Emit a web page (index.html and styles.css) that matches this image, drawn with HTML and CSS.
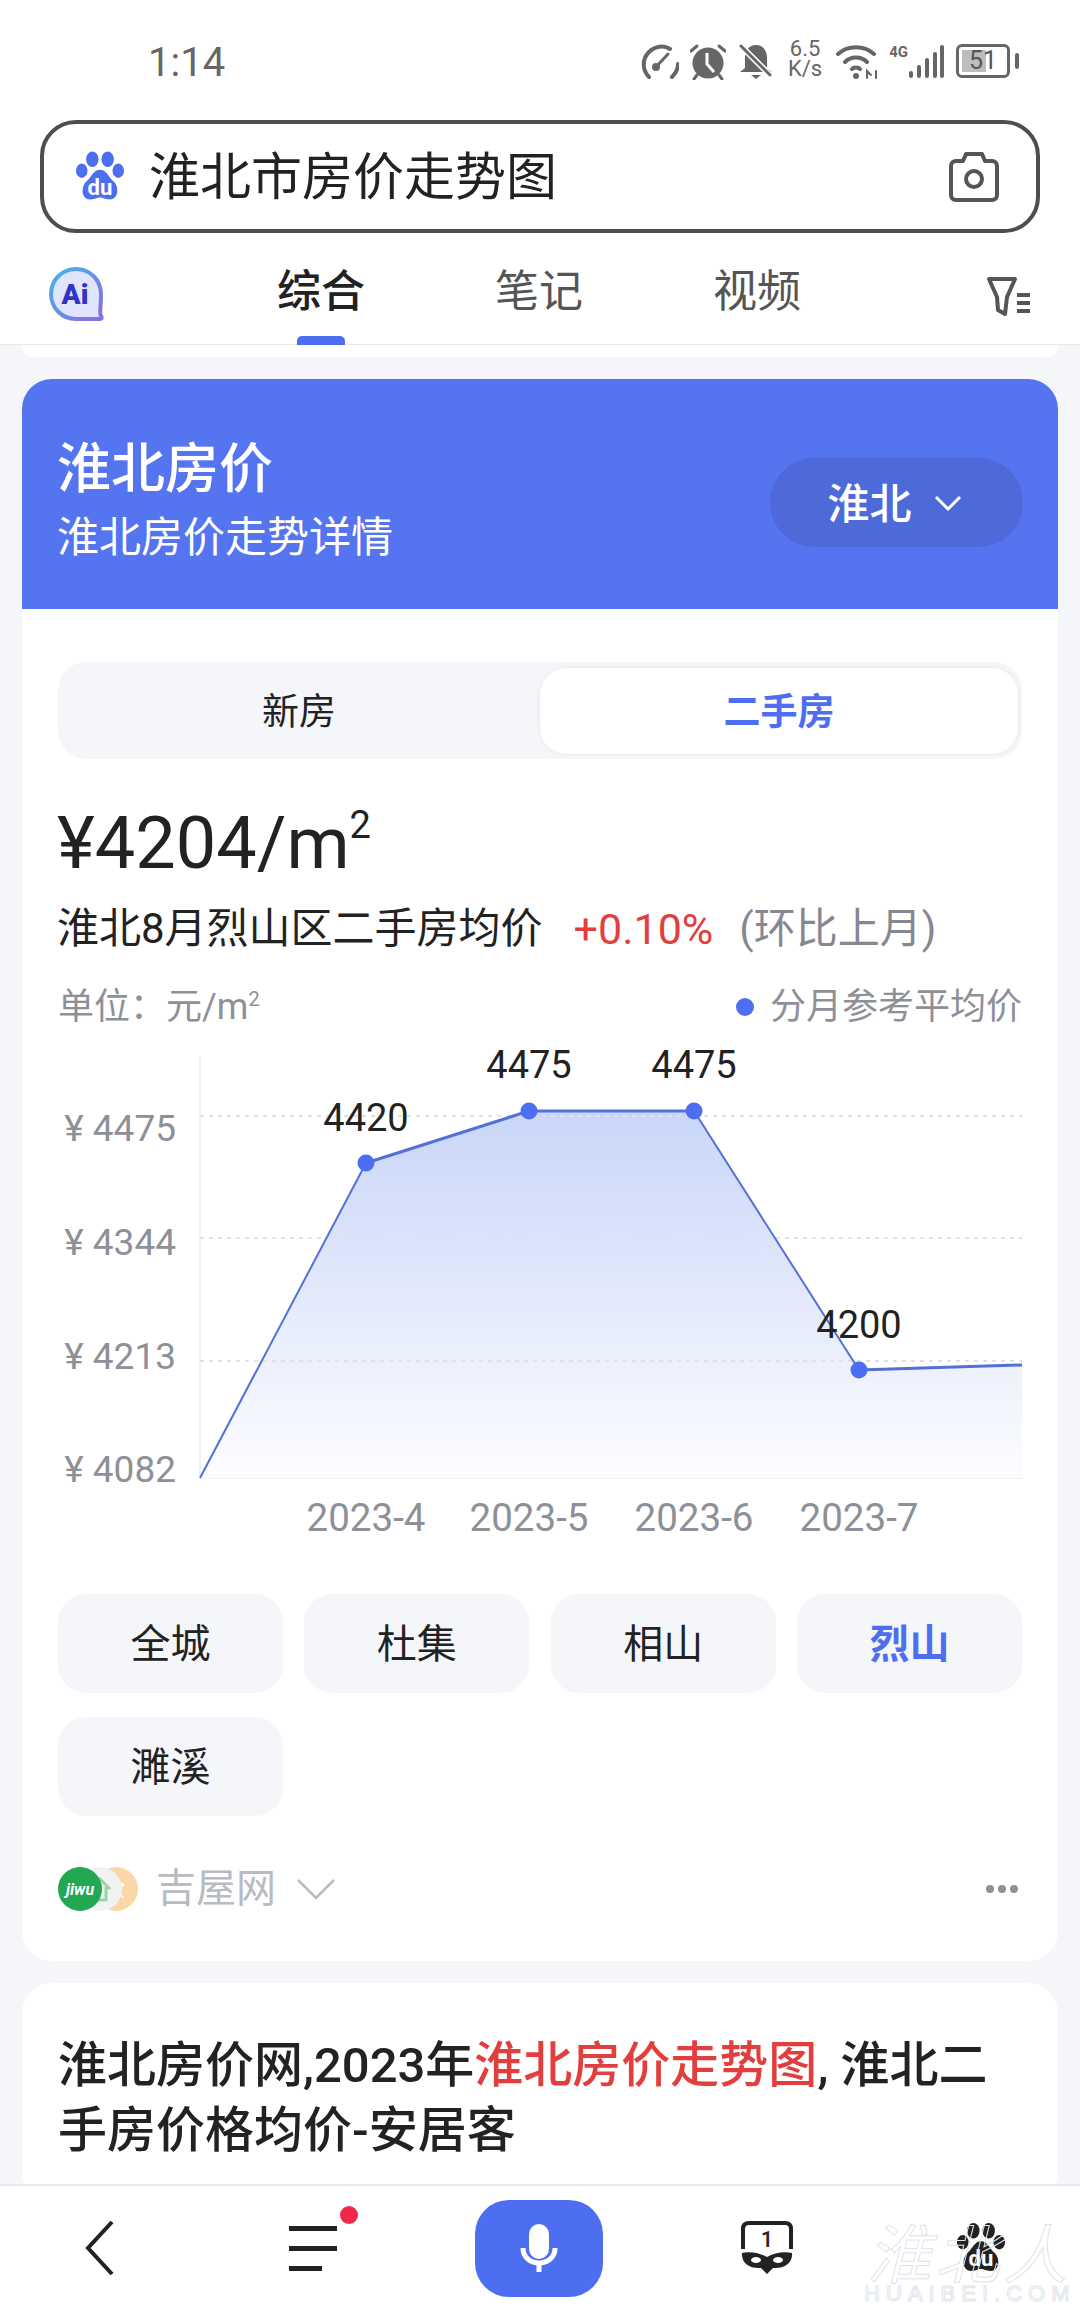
FILE: index.html
```html
<!DOCTYPE html>
<html lang="zh-CN">
<head>
    <meta charset="UTF-8">
    <meta name="viewport" content="width=device-width, initial-scale=1.0">
    <title>淮北市房价走势图</title>
    <link rel="stylesheet" href="styles.css">
</head>
<body>
<div class="page">
    <!-- status bar -->
    <div class="status-bar">
        <span class="time">1:14</span>
        <div class="status-icons">
            <svg class="ic-speed" width="38" height="36" viewBox="0 0 38 36" fill="none" stroke="#666" stroke-width="4" stroke-linecap="round"><path d="M8 33C1 26 1 15 8 8C14 2 23 1 29 5"/><path d="M31 33C35 29 37 25 37 20"/><path d="M14 24L27 10" stroke-width="3"/><circle cx="15" cy="23" r="4" fill="#666" stroke="none"/></svg>
            <svg class="ic-alarm" width="36" height="36" viewBox="0 0 36 36"><path d="M1 7L7 2M35 7L29 2M7 31L4 35M29 31L32 35" stroke="#666" stroke-width="3" stroke-linecap="round"/><circle cx="18" cy="19" r="15.5" fill="#666"/><path d="M17 9V20L24 28" fill="none" stroke="#fff" stroke-width="3"/></svg>
            <svg class="ic-bell" width="34" height="36" viewBox="0 0 34 36"><path d="M17 1C9 1 6 8 6 14V24L1 28H33L28 24V14C28 8 25 1 17 1Z" fill="#666"/><path d="M12 31H22L17 35Z" fill="#666"/><path d="M1 1L32 32" stroke="#fff" stroke-width="6"/><path d="M2 2L31 31" stroke="#666" stroke-width="3" stroke-linecap="round"/></svg>
            <div class="speed-text"><span>6.5</span><span>K/s</span></div>
            <svg class="ic-wifi" width="42" height="36" viewBox="0 0 42 36" fill="none" stroke="#666" stroke-width="4" stroke-linecap="round"><path d="M2 10C12 1 28 1 38 10"/><path d="M9 18C15 12 25 12 31 18"/><path d="M16 25C18 23 22 23 24 25"/><circle cx="20" cy="32" r="3" fill="#666" stroke="none"/><path d="M31 34V27L35 31M40 27V34" stroke-width="2"/></svg>
            <span class="net-label">4G</span>
            <svg class="ic-signal" width="36" height="34" viewBox="0 0 36 34" fill="#666"><rect x="1" y="26" width="4" height="7" rx="2"/><rect x="9" y="20" width="4" height="13" rx="2"/><rect x="17" y="13" width="4" height="20" rx="2"/><rect x="25" y="7" width="4" height="26" rx="2"/><rect x="32" y="0" width="4" height="33" rx="2"/></svg>
            <div class="battery"><div class="battery-fill"></div><span>51</span></div>
            <div class="battery-nub"></div>
        </div>
    </div>

    <!-- search box -->
    <div class="search-box">
        <svg class="paw" width="48" height="51" viewBox="0 0 50 52">
            <ellipse cx="17" cy="8" rx="6.5" ry="8" fill="#4e6ef2"/><ellipse cx="33" cy="8" rx="6.5" ry="8" fill="#4e6ef2"/>
            <ellipse cx="6" cy="20" rx="6" ry="7.5" fill="#4e6ef2"/><ellipse cx="44" cy="20" rx="6" ry="7.5" fill="#4e6ef2"/>
            <path d="M25 19C18 19 16 27 11 31C5 36 5 50 15 50C20 50 22 48 25 48C28 48 30 50 35 50C45 50 45 36 39 31C34 27 32 19 25 19Z" fill="#4e6ef2"/>
            <text x="25" y="45" class="paw-du" fill="#fff">du</text>
        </svg>
        <span class="search-text">淮北市房价走势图</span>
        <svg class="camera" width="52" height="52" viewBox="0 0 52 52" fill="none" stroke="#555" stroke-width="4"><path d="M8 10H15L18 3H34L37 10H44C47 10 49 12 49 15V44C49 47 47 49 44 49H8C5 49 3 47 3 44V15C3 12 5 10 8 10Z" stroke-linejoin="round"/><circle cx="26" cy="28" r="8"/></svg>
    </div>

    <!-- tabs -->
    <div class="tabs">
        <svg class="ai-icon" width="58" height="58" viewBox="0 0 58 58">
            <defs><linearGradient id="aiRing" x1="0" y1="0" x2="1" y2="1"><stop offset="0" stop-color="#45b4ea"/><stop offset="1" stop-color="#8a6ce6"/></linearGradient></defs>
            <path d="M28 3C14 3 3 14 3 28C3 42 14 53 28 53H52C54 53 54 51 53 50C51 47 53 44 53 28C53 14 42 3 28 3Z" fill="#dfe5fb" stroke="url(#aiRing)" stroke-width="4"/>
            <text x="27" y="38" class="ai-text">Ai</text>
        </svg>
        <div class="tab-list">
            <div class="tab tab-active">综合<div class="tab-bar"></div></div>
            <div class="tab">笔记</div>
            <div class="tab">视频</div>
        </div>
        <svg class="filter" width="46" height="42" viewBox="0 0 46 42" fill="none" stroke="#555" stroke-width="4"><path d="M3 3H29L21 21L19 38L12 34L11 21Z" stroke-linejoin="round"/><path d="M31 19H44M31 27H44M31 35H44"/></svg>
    </div>

    <div class="feed">
        <div class="prev-card"></div>

        <div class="card price-card">
            <div class="price-head">
                <div>
                    <div class="head-title">淮北房价</div>
                    <div class="head-sub">淮北房价走势详情</div>
                </div>
                <div class="city-pill">
                    <span>淮北</span>
                    <svg width="28" height="18" viewBox="0 0 28 18" fill="none" stroke="#fff" stroke-width="3"><path d="M2 3L14 15L26 3"/></svg>
                </div>
            </div>

            <div class="price-body">
                <div class="segment">
                    <div class="seg-item">新房</div>
                    <div class="seg-item seg-active">二手房</div>
                </div>

                <div class="price-big">¥4204/m<sup>2</sup></div>
                <div class="price-desc">
                    <span>淮北8月烈山区二手房均价</span>
                    <span class="rise">+0.10%</span>
                    <span class="compare">(环比上月)</span>
                </div>

                <div class="unit-row">
                    <span>单位：元/m<sup>2</sup></span>
                    <span class="legend"><i class="legend-dot"></i>分月参考平均价</span>
                </div>

                <svg class="chart" width="964" height="510" viewBox="58 1040 964 510">
                    <defs>
                        <linearGradient id="areaFill" x1="0" y1="0" x2="0" y2="1">
                            <stop offset="0" stop-color="#c9d6f8"/>
                            <stop offset="1" stop-color="#fdfdff"/>
                        </linearGradient>
                    </defs>
                    <path class="axis" d="M200 1056V1477M200 1477H1022"/>
                    <path class="axis" d="M366 1462V1477M529 1462V1477M694 1462V1477M859 1462V1477"/>
                    <path d="M200 1477L366 1162L529 1110H694L859 1369L1022 1364V1477Z" fill="url(#areaFill)"/>
                    <path class="grid" d="M200 1115H1022M200 1237H1022M200 1360H1022"/>
                    <path class="line" d="M200 1477L366 1162"/>
                    <path class="line line-thick" d="M366 1162L529 1110H694"/>
                    <path class="line" d="M694 1110L859 1369"/>
                    <path class="line line-thick" d="M859 1369L1022 1364"/>
                    <circle class="point" cx="366" cy="1162" r="8.5"/>
                    <circle class="point" cx="529" cy="1110" r="8.5"/>
                    <circle class="point" cx="694" cy="1110" r="8.5"/>
                    <circle class="point" cx="859" cy="1369" r="8.5"/>
                    <text class="val" x="366" y="1130">4420</text>
                    <text class="val" x="529" y="1077">4475</text>
                    <text class="val" x="694" y="1077">4475</text>
                    <text class="val" x="859" y="1337">4200</text>
                    <text class="y-tick" x="176" y="1140">¥ 4475</text>
                    <text class="y-tick" x="176" y="1254">¥ 4344</text>
                    <text class="y-tick" x="176" y="1368">¥ 4213</text>
                    <text class="y-tick" x="176" y="1481">¥ 4082</text>
                    <text class="x-tick" x="366" y="1530">2023-4</text>
                    <text class="x-tick" x="529" y="1530">2023-5</text>
                    <text class="x-tick" x="694" y="1530">2023-6</text>
                    <text class="x-tick" x="859" y="1530">2023-7</text>
                </svg>

                <div class="chips">
                    <div class="chip">全城</div>
                    <div class="chip">杜集</div>
                    <div class="chip">相山</div>
                    <div class="chip chip-active">烈山</div>
                    <div class="chip">濉溪</div>
                </div>

                <div class="source-row">
                    <div class="logos">
                        <div class="logo logo-orange">家</div>
                        <div class="logo logo-juke">
                            <svg width="26" height="26" viewBox="0 0 26 26" fill="none" stroke="#9bd3a5" stroke-width="3"><path d="M3 13L13 3L23 13M7 11V24H19V11"/></svg>
                        </div>
                        <div class="logo logo-jiwu">jiwu</div>
                    </div>
                    <span class="source-name">吉屋网</span>
                    <svg width="38" height="22" viewBox="0 0 38 22" fill="none" stroke="#b8bbc2" stroke-width="2.5"><path d="M1 2L19 20L37 2"/></svg>
                    <div class="more"><i></i><i></i><i></i></div>
                </div>
            </div>
        </div>

        <div class="card result-card">
            <div class="result-title">淮北房价网,2023年<em>淮北房价走势图</em>, 淮北二手房价格均价-安居客</div>
        </div>
    </div>

    <!-- bottom bar -->
    <div class="bottom-bar">
        <svg width="30" height="54" viewBox="0 0 30 54" fill="none" stroke="#222" stroke-width="4"><path d="M27 1L3 27L27 53"/></svg>
        <div class="menu-btn">
            <div class="menu-line"></div>
            <div class="menu-line"></div>
            <div class="menu-line menu-short"></div>
            <div class="red-dot"></div>
        </div>
        <div class="mic-btn">
            <svg width="38" height="48" viewBox="0 0 38 48" fill="none" stroke="#fff"><rect x="9" y="0" width="20" height="35" rx="10" fill="#fff" stroke="none"/><path d="M3 24C3 33 10 39 19 39C28 39 35 33 35 24" stroke-width="5"/><path d="M19 39V48" stroke-width="5"/></svg>
        </div>
        <svg width="54" height="54" viewBox="0 0 54 54"><path d="M3 28V8C3 4 5 2 9 2H45C49 2 51 4 51 8V28" fill="none" stroke="#222" stroke-width="4"/><text x="27" y="26" class="tab-count">1</text><path d="M2 32C10 30 20 32 27 36C34 32 44 30 52 32C53 42 44 48 33 47L27 53L21 47C10 48 1 42 2 32Z" fill="#222"/><ellipse cx="16" cy="39" rx="5" ry="3" fill="#fff"/><ellipse cx="38" cy="39" rx="5" ry="3" fill="#fff"/></svg>
        <svg width="48" height="50" viewBox="0 0 50 52">
            <ellipse cx="17" cy="8" rx="6.5" ry="8" fill="#222"/><ellipse cx="33" cy="8" rx="6.5" ry="8" fill="#222"/>
            <ellipse cx="6" cy="20" rx="6" ry="7.5" fill="#222"/><ellipse cx="44" cy="20" rx="6" ry="7.5" fill="#222"/>
            <path d="M25 19C18 19 16 27 11 31C5 36 5 50 15 50C20 50 22 48 25 48C28 48 30 50 35 50C45 50 45 36 39 31C34 27 32 19 25 19Z" fill="#222"/>
            <text x="25" y="45" class="paw-du" fill="#fff">du</text>
        </svg>
    </div>

    <!-- site watermark -->
    <div class="watermark">
        <div class="wm-cn">淮北人</div>
        <div class="wm-en">HUAIBEI.COM</div>
    </div>
</div>
</body>
</html>
```

FILE: styles.css
```css
* {
    box-sizing: border-box;
}

body {
    margin: 0;
    font-family: Roboto, "Noto Sans CJK SC", sans-serif;
    color: #222;
    background: #fff;
}

.page {
    position: relative;
    width: 1080px;
    height: 2310px;
    overflow: hidden;
    display: flex;
    flex-direction: column;
}

/* status bar */
.status-bar {
    height: 120px;
    flex: none;
    display: flex;
    justify-content: space-between;
    padding: 44px 61px 0 148px;
}

.time {
    font-size: 40px;
    line-height: 38px;
    color: #666;
}

.status-icons {
    display: flex;
    align-items: flex-start;
    height: 38px;
}

.ic-alarm {
    margin-left: 11px;
}

.ic-bell {
    margin-left: 13px;
}

.speed-text {
    display: flex;
    flex-direction: column;
    align-items: center;
    margin: -5px 0 0 15px;
    font-size: 22px;
    line-height: 20px;
    color: #666;
}

.ic-wifi {
    margin-left: 14px;
}

.net-label {
    margin-left: 11px;
    font-size: 15px;
    line-height: 17px;
    font-weight: 700;
    color: #666;
}

.ic-signal {
    margin: 1px 0 0 0;
}

.battery {
    position: relative;
    width: 54px;
    height: 34px;
    margin-left: 12px;
    border: 3px solid #666;
    border-radius: 6px;
    text-align: center;
    font-size: 25px;
    line-height: 28px;
    color: #555;
}

.battery span {
    position: relative;
}

.battery-fill {
    position: absolute;
    left: 3px;
    top: 3px;
    bottom: 3px;
    width: 50%;
    background: #bdbdbd;
}

.battery-nub {
    width: 4px;
    height: 16px;
    margin: 9px 0 0 5px;
    border-radius: 2px;
    background: #666;
}

/* search box */
.search-box {
    flex: none;
    width: 1000px;
    height: 113px;
    margin: 0 40px;
    padding: 0 36px 0 32px;
    display: flex;
    align-items: center;
    border: 4px solid #4e4e4e;
    border-radius: 36px;
}

.paw-du {
    font-size: 23px;
    font-weight: 700;
    text-anchor: middle;
}

.search-text {
    margin: 2px 0 0 25px;
    font-size: 51px;
    line-height: 60px;
}

.camera {
    margin-left: auto;
}

/* tabs */
.tabs {
    flex: none;
    height: 112px;
    display: flex;
    align-items: flex-start;
    padding: 27px 48px 0;
    border-bottom: 1px solid #e8e9ec;
}

.ai-icon {
    margin-top: 6px;
}

.ai-text {
    font-size: 28px;
    font-weight: 900;
    fill: #2e35c4;
    text-anchor: middle;
}

.tab-list {
    display: flex;
    margin-left: 106px;
}

.tab {
    position: relative;
    width: 218px;
    text-align: center;
    font-size: 44px;
    line-height: 64px;
    color: #555;
}

.tab-active {
    color: #222;
    font-weight: 500;
}

.tab-bar {
    position: absolute;
    left: 85px;
    top: 76px;
    width: 48px;
    height: 9px;
    border-radius: 5px 5px 0 0;
    background: #4e6ef2;
}

.filter {
    margin: 16px 0 0 auto;
}

/* feed */
.feed {
    flex: 1;
    min-height: 0;
    overflow: hidden;
    padding: 0 22px;
    background: #f5f6fa;
}

.prev-card {
    height: 12px;
    margin-bottom: 22px;
    background: #fff;
    border-radius: 0 0 28px 28px;
}

.card {
    background: #fff;
    border-radius: 30px;
    overflow: hidden;
}

.price-head {
    height: 230px;
    padding: 57px 35px 0 35px;
    display: flex;
    justify-content: space-between;
    align-items: flex-start;
    background: #5574f0;
    color: #fff;
}

.head-title {
    font-size: 54px;
    line-height: 68px;
    font-weight: 500;
}

.head-sub {
    margin-top: 6px;
    font-size: 42px;
    line-height: 56px;
}

.city-pill {
    width: 253px;
    height: 89px;
    margin-top: 22px;
    padding-right: 4px;
    display: flex;
    align-items: center;
    justify-content: center;
    gap: 22px;
    border-radius: 45px;
    background: #4e69d8;
    font-size: 42px;
    font-weight: 500;
}

.city-pill span {
    margin-bottom: 5px;
}

.price-body {
    padding: 53px 36px 47px;
}

.segment {
    height: 97px;
    display: flex;
    padding: 6px 4px 5px 0;
    border-radius: 28px;
    background: #f5f6fa;
}

.seg-item {
    flex: 1;
    display: flex;
    align-items: center;
    justify-content: center;
    padding-bottom: 4px;
    font-size: 37px;
}

.seg-active {
    flex: none;
    width: 478px;
    background: #fff;
    border-radius: 26px;
    color: #4e6ef2;
    font-weight: 700;
    box-shadow: 0 0 4px rgba(0, 0, 0, 0.08);
}

.price-big {
    margin-top: 40px;
    margin-left: -1px;
    font-size: 72px;
    line-height: 90px;
    height: 90px;
}

.price-big sup {
    font-size: 38px;
    line-height: 0;
    vertical-align: 30px;
}

.price-desc {
    margin-top: 15px;
    margin-left: -1px;
    font-size: 42px;
    line-height: 50px;
    display: flex;
    white-space: nowrap;
}

.rise {
    margin-left: 31px;
    font-size: 43px;
    color: #e33e3e;
}

.compare {
    margin-left: 26px;
    color: #858891;
}

.unit-row {
    margin-top: 31px;
    height: 44px;
    display: flex;
    justify-content: space-between;
    font-size: 36px;
    line-height: 44px;
    color: #8d9097;
}

.unit-row sup {
    font-size: 20px;
    line-height: 0;
}

.legend {
    display: flex;
    align-items: center;
}

.legend-dot {
    width: 18px;
    height: 18px;
    margin-right: 16px;
    border-radius: 50%;
    background: #4e6ef2;
}

/* chart */
.chart {
    display: block;
    margin-top: 12px;
}

.axis {
    fill: none;
    stroke: #f0f1f4;
    stroke-width: 2;
}

.grid {
    fill: none;
    stroke: #dfe1e6;
    stroke-width: 2;
    stroke-dasharray: 4 5;
}

.line {
    fill: none;
    stroke: #5470d8;
    stroke-width: 2;
}

.line-thick {
    stroke-width: 3;
}

.point {
    fill: #4e6ef2;
}

.val {
    font-size: 38px;
    fill: #222;
    text-anchor: middle;
}

.y-tick {
    font-size: 37px;
    fill: #8d9097;
    text-anchor: end;
}

.x-tick {
    font-size: 38.5px;
    fill: #8d9097;
    text-anchor: middle;
}

/* district chips */
.chips {
    margin-top: 43px;
    display: grid;
    grid-template-columns: repeat(4, 225px);
    justify-content: space-between;
    grid-auto-rows: 99px;
    row-gap: 24px;
}

.chip {
    display: flex;
    align-items: center;
    justify-content: center;
    padding-bottom: 6px;
    border-radius: 28px;
    background: #f5f6fa;
    font-size: 40px;
}

.chip-active {
    color: #4e6ef2;
    font-weight: 700;
}

/* source */
.source-row {
    margin-top: 48px;
    height: 50px;
    display: flex;
    align-items: center;
}

.logos {
    position: relative;
    width: 80px;
    height: 44px;
}

.logo {
    position: absolute;
    top: 0;
    width: 44px;
    height: 44px;
    border-radius: 50%;
    display: flex;
    align-items: center;
    justify-content: center;
}

.logo-jiwu {
    left: 0;
    background: #22a852;
    color: #fff;
    font-size: 16px;
    font-weight: 700;
    font-style: italic;
}

.logo-juke {
    left: 20px;
    background: #f1f3f3;
}

.logo-orange {
    left: 36px;
    background: #f9d7a8;
    color: #fff;
    font-size: 18px;
}

.source-name {
    margin: 0 21px 0 18px;
    font-size: 40px;
    line-height: 50px;
    color: #b8bbc2;
}

.more {
    margin-left: auto;
    display: flex;
    gap: 4px;
    padding-right: 4px;
}

.more i {
    width: 8px;
    height: 8px;
    border-radius: 50%;
    background: #8d9097;
}

/* result card */
.result-card {
    margin-top: 22px;
    padding: 50px 36px 40px;
}

.result-title {
    font-size: 49px;
    line-height: 65px;
    font-weight: 500;
}

.result-title em {
    font-style: normal;
    color: #e33e3e;
}

/* bottom bar */
.bottom-bar {
    flex: none;
    height: 126px;
    display: grid;
    grid-template-columns: 200px 226px 226px 230px 198px;
    align-items: center;
    justify-items: center;
    background: #fff;
    border-top: 2px solid #e8e9ec;
}

.menu-btn {
    position: relative;
    width: 48px;
    display: flex;
    flex-direction: column;
    gap: 15px;
}

.menu-line {
    height: 5px;
    background: #222;
}

.menu-short {
    width: 33px;
}

.red-dot {
    position: absolute;
    left: 51px;
    top: -20px;
    width: 18px;
    height: 18px;
    border-radius: 50%;
    background: #f0264a;
}

.mic-btn {
    width: 128px;
    height: 97px;
    display: flex;
    align-items: center;
    justify-content: center;
    border-radius: 34px;
    background: #4e6ef2;
}

.tab-count {
    font-size: 22px;
    font-weight: 500;
    fill: #222;
    text-anchor: middle;
}

/* watermark sits over the bar */
.watermark {
    position: absolute;
    right: 6px;
    bottom: 5px;
    width: 210px;
    text-align: center;
    white-space: nowrap;
    color: transparent;
    -webkit-text-stroke: 1px #dfe3ea;
    pointer-events: none;
}

.wm-cn {
    font-size: 64px;
    line-height: 52px;
    font-style: italic;
    letter-spacing: 4px;
}

.wm-en {
    font-family: "Liberation Sans", sans-serif;
    font-size: 22px;
    line-height: 22px;
    letter-spacing: 6px;
}
```
